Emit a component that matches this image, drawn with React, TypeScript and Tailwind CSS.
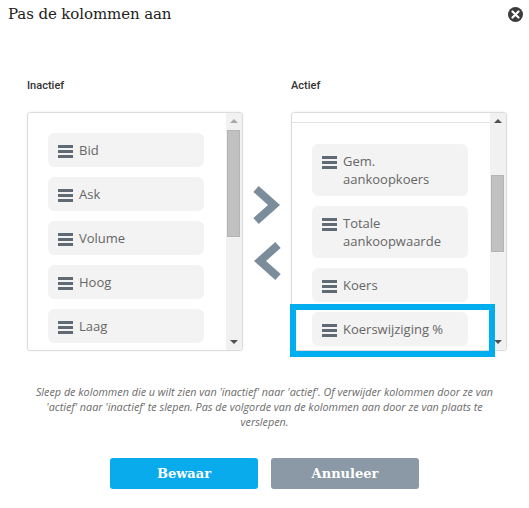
import React from 'react';

const inactive = ['Bid', 'Ask', 'Volume', 'Hoog', 'Laag'];
const active = ['Gem. aankoopkoers', 'Totale aankoopwaarde', 'Koers', 'Koerswijziging %'];

function Grip() {
  return (
    <span className="flex flex-col gap-[2.5px] w-[15px] shrink-0 mt-[4px]">
      <span className="h-[2.5px] bg-[#5f6a74]" />
      <span className="h-[2.5px] bg-[#5f6a74]" />
      <span className="h-[2.5px] bg-[#5f6a74]" />
    </span>
  );
}

function Item({ label, wrap }: { label: string; wrap?: boolean }) {
  return (
    <div className="flex items-start gap-[6px] w-[156px] rounded-[6px] bg-[#f3f3f3] pl-[10px] pr-[10px] py-[8px] text-[13px] leading-[18px] text-[#666]">
      <Grip />
      <span className={wrap ? 'w-[110px]' : ''}>{label}</span>
    </div>
  );
}

function Scrollbar({ top, height, upLight }: { top: number; height: number; upLight?: boolean }) {
  return (
    <div className="relative w-[16px] shrink-0 bg-[#f1f1f1]">
      <span
        className={`absolute left-[4px] top-[6px] w-0 h-0 border-l-[4px] border-r-[4px] border-b-[4px] border-l-transparent border-r-transparent ${
          upLight ? 'border-b-[#a8a8a8]' : 'border-b-[#505050]'
        }`}
      />
      <span
        className="absolute left-[1px] w-[13px] bg-[#c1c1c1] border border-[#b4b4b4]"
        style={{ top, height }}
      />
      <span className="absolute left-[4px] bottom-[6px] w-0 h-0 border-l-[4px] border-r-[4px] border-t-[4px] border-l-transparent border-r-transparent border-t-[#505050]" />
    </div>
  );
}

export default function App() {
  return (
    <div className="w-[529px] h-[508px] bg-white relative overflow-hidden font-['Open_Sans',sans-serif]">
      {/* header */}
      <div className="flex items-start justify-between pl-[8px] pr-[6px] pt-[4px]">
        <h1 className="font-['DejaVu_Serif',serif] text-[15px] leading-[20px] text-[#222] tracking-[-0.1px]">
          Pas de kolommen aan
        </h1>
        <span className="mt-[3px] w-[15px] h-[15px] rounded-full bg-[#3c3c3c] flex items-center justify-center">
          <svg width="9" height="9" viewBox="0 0 9 9">
            <path d="M1.5 1.5 L7.5 7.5 M7.5 1.5 L1.5 7.5" stroke="#fff" strokeWidth="2.2" strokeLinecap="round" />
          </svg>
        </span>
      </div>

      {/* columns */}
      <div className="flex pl-[27px] mt-[55px]">
        <div className="w-[216px]">
          <div className="font-['Roboto',sans-serif] font-medium text-[11px] leading-[14px] text-[#333] mb-[19px]">
            Inactief
          </div>
          <div className="flex h-[239px] border border-[#dcdcdc] rounded-[3px] shadow-[0_0_2px_rgba(0,0,0,0.08)] overflow-hidden">
            <div className="flex-1 flex flex-col gap-[10px] pl-[20px] pt-[20px]">
              {inactive.map((l) => (
                <Item key={l} label={l} />
              ))}
            </div>
            <Scrollbar top={17} height={107} upLight />
          </div>
        </div>

        <div className="w-[48px] flex flex-col items-center pt-[106px] gap-[16px]">
          <svg width="30" height="40" viewBox="0 0 30 40">
            <polyline points="4,4 22,20 4,36" fill="none" stroke="#7b8d9a" strokeWidth="8" strokeLinejoin="miter" />
          </svg>
          <svg width="30" height="40" viewBox="0 0 30 40">
            <polyline points="26,4 8,20 26,36" fill="none" stroke="#7b8d9a" strokeWidth="8" strokeLinejoin="miter" />
          </svg>
        </div>

        <div className="w-[216px] relative">
          <div className="font-['Roboto',sans-serif] font-medium text-[11px] leading-[14px] text-[#333] mb-[19px]">
            Actief
          </div>
          <div className="flex h-[239px] border border-[#dcdcdc] rounded-[3px] shadow-[0_0_2px_rgba(0,0,0,0.08)] overflow-hidden">
            <div className="flex-1 flex flex-col">
              <div className="h-[10px] border-b border-[#e3e3e3]" />
              <div className="flex flex-col gap-[10px] pl-[20px] pt-[21px]">
                {active.map((l) => (
                  <Item key={l} label={l} wrap={l.includes(' ') && l !== 'Koerswijziging %'} />
                ))}
              </div>
            </div>
            <Scrollbar top={62} height={77} />
          </div>
          {/* drop highlight */}
          <div className="absolute left-[-1px] top-[225px] w-[205px] h-[53px] border-[6px] border-[#00aeef]" />
        </div>
      </div>

      {/* help text */}
      <p className="mx-auto mt-[33px] w-[462px] text-center italic text-[10.8px] leading-[15px] text-[#6b6b6b]">
        Sleep de kolommen die u wilt zien van 'inactief' naar 'actief'. Of verwijder kolommen door ze van 'actief' naar
        'inactief' te slepen. Pas de volgorde van de kolommen aan door ze van plaats te verslepen.
      </p>

      {/* buttons */}
      <div className="flex justify-center gap-[13px] mt-[29px]">
        <button className="w-[148px] h-[31px] rounded-[3px] bg-[#0aabec] text-white font-['DejaVu_Serif',serif] font-bold text-[13px]">
          Bewaar
        </button>
        <button className="w-[148px] h-[31px] rounded-[3px] bg-[#8a99a5] text-white font-['DejaVu_Serif',serif] font-bold text-[13px]">
          Annuleer
        </button>
      </div>
    </div>
  );
}
